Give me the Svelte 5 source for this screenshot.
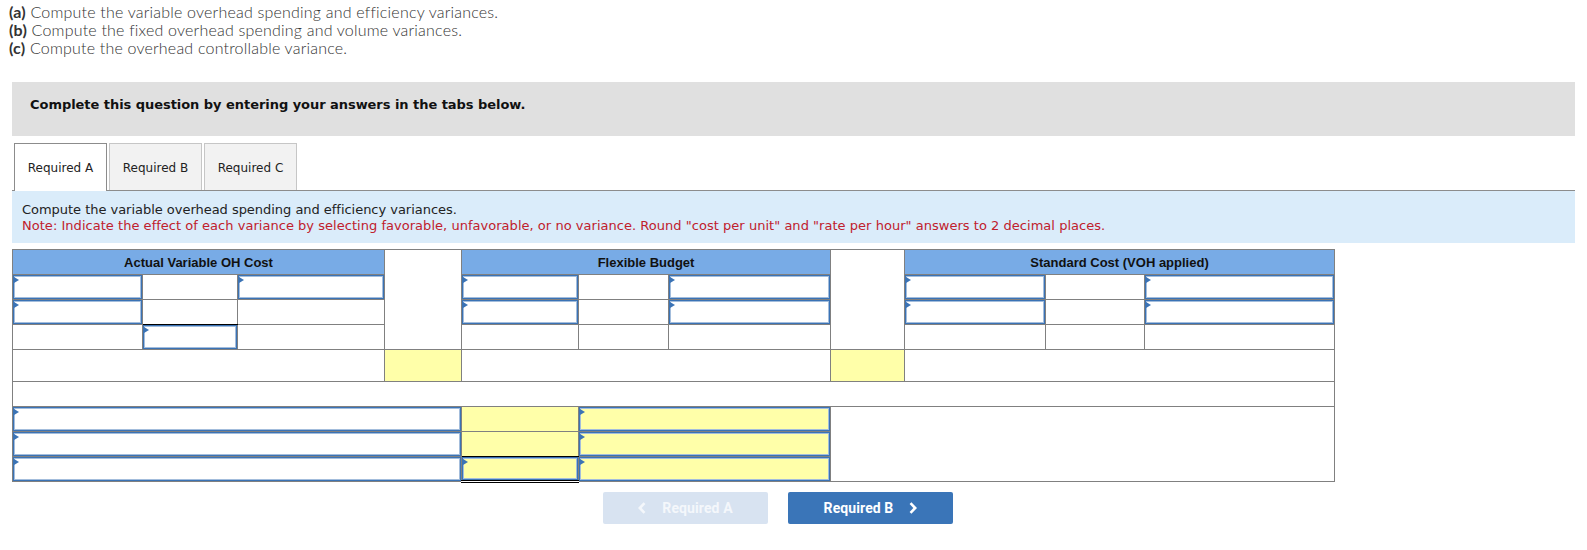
<script>
  const cols = [130, 95, 147, 77, 117, 90, 162, 74, 141, 99, 190];
  const groups = ['Actual Variable OH Cost', 'Flexible Budget', 'Standard Cost (VOH applied)'];
</script>

<main class="page">
  <div class="intro">
    <p class="cut"><b>Required:</b></p>
    <p><b>(a)</b> Compute the variable overhead spending and efficiency variances.</p>
    <p><b>(b)</b> Compute the fixed overhead spending and volume variances.</p>
    <p><b>(c)</b> Compute the overhead controllable variance.</p>
  </div>

  <div class="banner">Complete this question by entering your answers in the tabs below.</div>

  <div class="tabs">
    <div class="tab active">Required A</div>
    <div class="tab">Required B</div>
    <div class="tab">Required C</div>
  </div>

  <div class="prompt">
    <div class="ask">Compute the variable overhead spending and efficiency variances.</div>
    <div class="note">Note: Indicate the effect of each variance by selecting favorable, unfavorable, or no variance. Round "cost per unit" and "rate per hour" answers to 2 decimal places.</div>
  </div>

  <table>
    <colgroup>
      {#each cols as w}<col style="width:{w}px" />{/each}
    </colgroup>
    <tbody>
      <tr class="head">
        <th colspan="3">{groups[0]}</th>
        <td rowspan="4"></td>
        <th colspan="3">{groups[1]}</th>
        <td rowspan="4"></td>
        <th colspan="3">{groups[2]}</th>
      </tr>
      <tr>
        <td class="in"></td><td></td><td class="in"></td>
        <td class="in"></td><td></td><td class="in"></td>
        <td class="in"></td><td></td><td class="in"></td>
      </tr>
      <tr>
        <td class="in"></td><td class="under"></td><td></td>
        <td class="in"></td><td></td><td class="in"></td>
        <td class="in"></td><td></td><td class="in"></td>
      </tr>
      <tr>
        <td></td><td class="in"></td><td></td>
        <td></td><td></td><td></td>
        <td></td><td></td><td></td>
      </tr>
      <tr class="total">
        <td colspan="3"></td><td class="yellow"></td>
        <td colspan="3"></td><td class="yellow"></td>
        <td colspan="3"></td>
      </tr>
      <tr><td colspan="11"></td></tr>
      <tr>
        <td colspan="4" class="in"></td><td class="yellow"></td><td colspan="2" class="in yellow"></td>
        <td colspan="4" rowspan="3"></td>
      </tr>
      <tr>
        <td colspan="4" class="in"></td><td class="yellow under"></td><td colspan="2" class="in yellow"></td>
      </tr>
      <tr>
        <td colspan="4" class="in"></td><td class="in yellow blackbottom"></td><td colspan="2" class="in yellow"></td>
      </tr>
    </tbody>
  </table>

  <nav class="pager">
    <button class="btn off" disabled>
      <svg viewBox="0 0 8 12" width="8" height="12"><path d="M6.5 1.2 1.8 6l4.7 4.8" /></svg>
      <span>Required A</span>
    </button>
    <button class="btn">
      <span>Required B</span>
      <svg viewBox="0 0 8 12" width="8" height="12"><path d="M1.5 1.2 6.2 6l-4.7 4.8" /></svg>
    </button>
  </nav>
</main>

<style>
  :global(body) {
    margin: 0;
    background: #fff;
  }
  .page {
    width: 1587px;
    height: 550px;
    overflow: hidden;
  }
  .intro {
    margin-top: -18px;
    padding-left: 9px;
    font: 300 16px/18px Lato, sans-serif;
    letter-spacing: 0.2px;
    color: #333;
  }
  .intro p {
    margin: 0;
  }
  .intro .cut {
    margin-bottom: 3px;
  }
  .intro b {
    font-weight: 700;
    color: #333;
  }
  .banner {
    margin: 25px 12px 0;
    height: 54px;
    box-sizing: border-box;
    display: flex;
    align-items: center;
    padding: 0 0 10px 18px;
    background: #e0e0e0;
    font: bold 13px "DejaVu Sans", Verdana, sans-serif;
    letter-spacing: -0.045px;
    color: #111;
  }
  .tabs {
    display: flex;
    gap: 2px;
    margin: 7px 12px 0 14px;
    height: 47px;
  }
  .tab {
    width: 93px;
    box-sizing: border-box;
    display: flex;
    align-items: center;
    justify-content: center;
    padding-top: 1px;
    background: #f2f2f2;
    border: 1px solid #c6c6c6;
    border-bottom: 0;
    font: 12px "DejaVu Sans", Verdana, sans-serif;
    color: #222;
  }
  .tab.active {
    background: #fff;
    border-color: #8c8c8c;
    height: 48px;
    padding-top: 0;
    position: relative;
    z-index: 1;
  }
  .prompt {
    margin: 0 12px;
    height: 53px;
    box-sizing: border-box;
    padding: 11px 10px 0;
    background: #daecfa;
    border-top: 1px solid #8c8c8c;
    font: 13px/16px "DejaVu Sans", Verdana, sans-serif;
    color: #222;
  }
  .ask {
    letter-spacing: -0.03px;
  }
  .note {
    color: #c0202c;
    letter-spacing: 0.03px;
  }
  table {
    margin: 6px 0 0 12px;
    width: 1322px;
    table-layout: fixed;
    border-collapse: collapse;
  }
  tr {
    height: 25px;
  }
  tr.total {
    height: 32px;
  }
  th,
  td {
    border: 1px solid #808080;
    padding: 0;
    position: relative;
  }
  th {
    background: #78abe6;
    font: bold 13px "Liberation Sans", Arial, sans-serif;
    color: #111;
    text-align: center;
  }
  .yellow {
    background: #ffffa9;
  }
  .in {
    box-shadow: inset 0 0 0 1px #3b73b5, inset 0 0 0 2px #a3bddc;
  }
  .in::before {
    content: "";
    position: absolute;
    top: 2px;
    left: 1px;
    border-style: solid;
    border-width: 3.5px 0 3.5px 5px;
    border-color: transparent transparent transparent #3b73b5;
  }
  .under {
    border-bottom: 1px solid #000;
  }
  .blackbottom {
    border-bottom: 3px double #000;
  }
  .pager {
    display: flex;
    gap: 20px;
    padding: 9px 0 0 603px;
  }
  .btn {
    width: 165px;
    height: 32px;
    display: flex;
    align-items: center;
    justify-content: center;
    gap: 16px;
    padding: 0;
    border: 0;
    border-radius: 2px;
    background: #3a75b8;
    color: #fff;
    font: bold 14px Roboto, Arial, sans-serif;
    letter-spacing: 0.1px;
  }
  .btn.off {
    background: #d8e3f1;
    color: #f4f7fb;
  }
  .btn svg {
    fill: none;
    stroke: currentColor;
    stroke-width: 2.6;
  }
</style>
